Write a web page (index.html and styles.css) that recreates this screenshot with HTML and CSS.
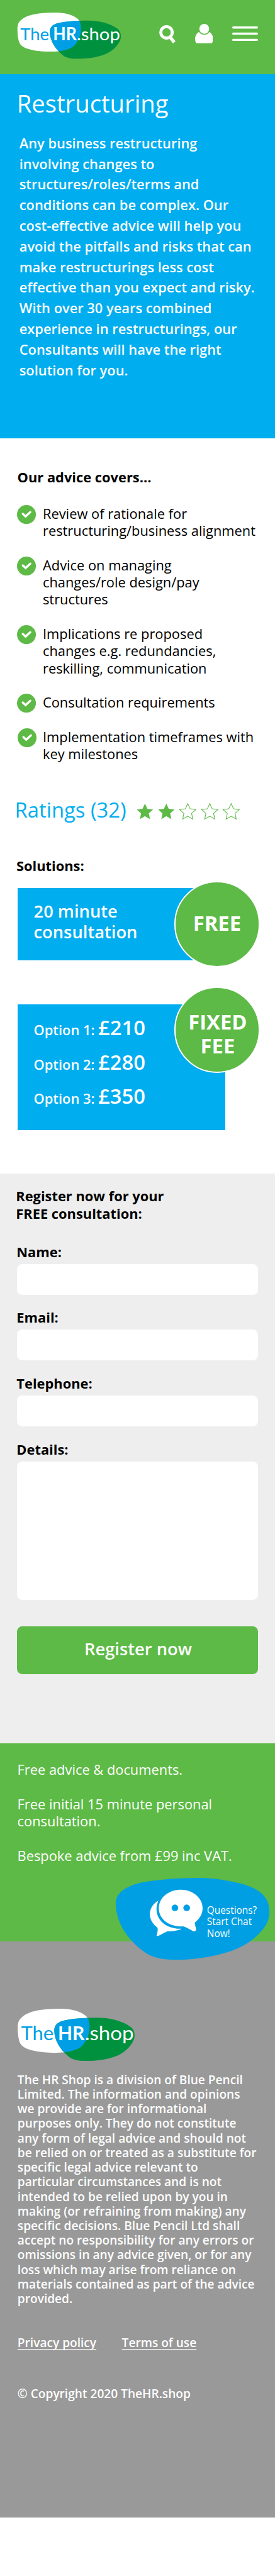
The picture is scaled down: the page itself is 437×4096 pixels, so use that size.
FILE: index.html
```
<!DOCTYPE html>
<html lang="en">
<head>
<meta charset="utf-8">
<title>Restructuring – TheHR.shop</title>
<link rel="stylesheet" href="styles.css">
</head>
<body>
<svg class="defs" aria-hidden="true">
  <defs>
    <path id="blob-white" d="M33,160 C33,122 44,104 62,88 C110,45 200,29 325,29 C430,29 482,55 511,80 C530,98 536,125 536,155 C536,200 520,245 495,275 C468,318 390,338 290,338 C190,337 95,322 60,285 C40,265 33,210 33,160Z"/>
    <path id="blob-green" d="M289,180 C289,145 312,126 345,115 C405,98 500,92 600,92 C710,94 800,132 834,166 C848,185 851,200 851,220 C851,250 820,308 750,348 C690,380 600,395 510,395 C450,395 415,385 390,365 C330,315 289,250 289,180Z"/>
    <clipPath id="overlap"><use href="#blob-white"/></clipPath>
    <symbol id="logo" viewBox="33 29 819 367">
      <use href="#blob-white" fill="#fff"/>
      <use href="#blob-green" fill="#00913f"/>
      <use href="#blob-green" fill="#009fe5" clip-path="url(#overlap)"/>
      <text class="logo-text" x="56" y="248" fill="#009fe5" textLength="228" lengthAdjust="spacingAndGlyphs">The</text>
      <text class="logo-text logo-bold" x="314" y="248" fill="#fff" textLength="187" lengthAdjust="spacingAndGlyphs">HR</text>
      <text class="logo-text" x="502" y="248" fill="#fff" textLength="343" lengthAdjust="spacingAndGlyphs">.shop</text>
    </symbol>
    <symbol id="check" viewBox="0 0 44 44">
      <circle cx="22" cy="22" r="22" fill="#5dba46"/>
      <path d="M13.5 20.5 L20 26.5 L31 16.5" fill="none" stroke="#fff" stroke-width="5" stroke-linecap="round"/>
    </symbol>
    <symbol id="star" viewBox="0 0 42 42">
      <path d="M21 2.5 L26.6 14.8 L40 16.3 L30 25.4 L32.8 38.7 L21 32 L9.2 38.7 L12 25.4 L2 16.3 L15.4 14.8Z"/>
    </symbol>
  </defs>
</svg>

<header class="header">
  <svg class="logo"><use href="#logo"/></svg>
  <nav class="tools">
    <svg class="icon-search" viewBox="33 -4 115 128"><circle cx="84" cy="46" r="40" fill="none" stroke="#fff" stroke-width="21"/><path d="M113 84 L138 116" stroke="#fff" stroke-width="23"/></svg>
    <svg class="icon-user" viewBox="282 -12 126 135" fill="#fff"><ellipse cx="346" cy="22.500" rx="34" ry="34.500"/><path d="M309,44 C292,55 282,72 282,92 C282,105 285,115 291,123 H399 C405,115 408,105 408,92 C408,72 398,55 383,44 C374,58 360,64 346,64 C331,64 318,58 309,44Z"/></svg>
    <svg class="icon-menu" viewBox="0 0 180 102" fill="#fff"><rect width="180" height="15" rx="7"/><rect y="43" width="180" height="15" rx="7"/><rect y="87" width="180" height="15" rx="7"/></svg>
  </nav>
</header>

<section class="hero">
  <h1>Restructuring</h1>
  <p>Any business restructuring<br>involving changes to<br>structures/roles/terms and<br>conditions can be complex. Our<br>cost-effective advice will help you<br>avoid the pitfalls and risks that can<br>make restructurings less cost<br>effective than you expect and risky.<br>With over 30 years combined<br>experience in restructurings, our<br>Consultants will have the right<br>solution for you.</p>
</section>

<main class="content">
  <h2>Our advice covers...</h2>
  <ul class="checks">
    <li><svg><use href="#check"/></svg><span>Review of rationale for<br>restructuring/business alignment</span></li>
    <li><svg><use href="#check"/></svg><span>Advice on managing<br>changes/role design/pay<br>structures</span></li>
    <li><svg><use href="#check"/></svg><span>Implications re proposed<br>changes e.g. redundancies,<br>reskilling, communication</span></li>
    <li><svg><use href="#check"/></svg><span>Consultation requirements</span></li>
    <li><svg><use href="#check"/></svg><span>Implementation timeframes with<br>key milestones</span></li>
  </ul>
  <div class="ratings">
    <span class="ratings-label">Ratings (32)</span>
    <svg class="star on"><use href="#star"/></svg>
    <svg class="star on"><use href="#star"/></svg>
    <svg class="star"><use href="#star"/></svg>
    <svg class="star"><use href="#star"/></svg>
    <svg class="star"><use href="#star"/></svg>
  </div>
  <h2 class="solutions">Solutions:</h2>
  <div class="card card-free">
    <p>20 minute<br>consultation</p>
    <div class="badge">FREE</div>
  </div>
  <div class="card card-fixed">
    <ul class="options">
      <li><span>Option 1: </span>£210</li>
      <li><span>Option 2: </span>£280</li>
      <li><span>Option 3: </span>£350</li>
    </ul>
    <div class="badge">FIXED<br>FEE</div>
  </div>
</main>

<form class="register">
  <h2>Register now for your<br>FREE consultation:</h2>
  <label>Name:<input type="text"></label>
  <label>Email:<input type="text"></label>
  <label>Telephone:<input type="text"></label>
  <label>Details:<textarea></textarea></label>
  <button type="button">Register now</button>
</form>

<section class="promo">
  <p>Free advice &amp; documents.</p>
  <p>Free initial 15 minute personal<br>consultation.</p>
  <p>Bespoke advice from £99 inc VAT.</p>
  <a class="chat">
    <svg viewBox="661 868 875 498" preserveAspectRatio="none">
      <path fill="#009fe3" d="M661,1020 C661,960 720,918 805,897 C880,880 1010,868 1125,868 C1180,868 1240,873 1290,884 C1450,910 1536,962 1536,1070 C1536,1110 1530,1140 1500,1180 C1440,1260 1370,1293 1310,1316 C1210,1350 1110,1366 1010,1366 C930,1366 880,1355 840,1330 C740,1260 661,1150 661,1020Z"/>
      <path fill="#fff" d="M1031,940 C1100,940 1156,990 1156,1052 C1156,1090 1137,1118 1111,1140 C1113,1156 1116,1168 1119,1180 C1120,1190 1110,1195 1100,1191 C1082,1182 1062,1168 1045,1163 C960,1167 906,1115 906,1052 C906,990 962,940 1031,940Z"/>
      <path fill="#fff" d="M904,1006 C873,1025 855,1055 855,1090 C855,1120 872,1148 898,1170 C903,1183 897,1205 893,1222 C912,1222 935,1200 955,1193 C985,1192 1015,1190 1036,1177 C950,1180 893,1125 893,1058 C893,1040 898,1022 904,1006Z"/>
      <ellipse fill="#009fe3" cx="998" cy="1050" rx="19" ry="20"/><ellipse fill="#009fe3" cx="1065" cy="1050" rx="19" ry="20"/>
    </svg>
    <span>Questions?<br>Start Chat<br>Now!</span>
  </a>
</section>

<footer class="footer">
  <svg class="logo"><use href="#logo"/></svg>
  <p class="legal">The HR Shop is a division of Blue Pencil<br>Limited. The information and opinions<br>we provide are for informational<br>purposes only. They do not constitute<br>any form of legal advice and should not<br>be relied on or treated as a substitute for<br>specific legal advice relevant to<br>particular circumstances and is not<br>intended to be relied upon by you in<br>making (or refraining from making) any<br>specific decisions. Blue Pencil Ltd shall<br>accept no responsibility for any errors or<br>omissions in any advice given, or for any<br>loss which may arise from reliance on<br>materials contained as part of the advice<br>provided.</p>
  <div class="links"><a>Privacy policy</a><a>Terms of use</a></div>
  <p class="copyright">© Copyright 2020 TheHR.shop</p>
</footer>
</body>
</html>
```
FILE: styles.css
```
/* 1rem = 10 design pixels */
html { font-size: 6.83px; }
* { box-sizing: border-box; margin: 0; padding: 0; }
body {
  font-family: "Open Sans", "Noto Sans", sans-serif;
  font-size: 3.2rem;
  line-height: 4rem;
  color: #000;
  background: #fff;
  height: 599.7rem;
  overflow-x: hidden;
}
ul { list-style: none; }
svg { display: block; flex: none; }
p, h1, h2, li, label { white-space: nowrap; }
h2 { font-size: 3.2rem; font-weight: 700; line-height: 4rem; }
.defs { position: absolute; width: 0; height: 0; }

.logo-text { font-family: Lato, sans-serif; font-size: 138px; font-weight: 400; }
.logo-bold { font-weight: 700; }

.header {
  display: flex;
  justify-content: space-between;
  align-items: flex-start;
  height: 17.3rem;
  padding: 2.9rem 4rem 0;
  background: #5dba46;
}
.header .logo { width: 24.3rem; height: 10.8rem; }
.tools { display: flex; align-items: flex-start; gap: 4.43rem; }
.icon-search { width: 3.83rem; height: 4.27rem; margin-top: 2.97rem; }
.icon-user { width: 4.2rem; height: 4.5rem; margin-top: 2.7rem; }
.icon-menu { width: 6rem; height: 3.4rem; margin-top: 3.2rem; }

.hero { height: 84.8rem; padding: 3.76rem 0 0 4.5rem; color: #fff; background: #00adef; }
.hero h1 { margin-left: -.6rem; font-size: 5.6rem; font-weight: 400; line-height: 6rem; }
.hero p { margin-top: 3.97rem; font-weight: 600; line-height: 4.8rem; }

.content { height: 171.12rem; padding: 7.03rem 0 0 4.08rem; }
.content h2 { margin-left: -.04rem; }
.checks { display: flex; flex-direction: column; gap: 4rem; margin-top: 4.4rem; }
.checks li { display: flex; gap: 1.55rem; margin-left: -.08rem; }
.checks svg { width: 4.4rem; height: 4.4rem; margin: .02rem 0 -1rem; }
.checks li:first-child svg { margin-top: .1rem; }
.checks li:last-child svg { margin-left: .07rem; margin-right: -.07rem; }
.ratings { display: flex; margin: 7.94rem 0 0 -.63rem; }
.ratings-label { width: 28.15rem; font-size: 4.8rem; line-height: 6rem; color: #00adef; }
.star { width: 4.2rem; height: 4.2rem; margin: 1.35rem .83rem 0 0; fill: none; stroke: #5dba46; stroke-width: 1.6; overflow: visible; }
.star.on { fill: #5dba46; stroke: none; }
.content .solutions { margin: 8.06rem 0 0 -.28rem; }

.card { position: relative; width: 48.3rem; padding-left: 3.76rem; color: #fff; background: #00adef; font-weight: 600; }
.card-free { height: 16.95rem; margin-top: 3.17rem; padding-top: 3.12rem; font-size: 4rem; line-height: 4.8rem; }
.card-fixed { height: 29.21rem; margin-top: 10.24rem; padding-top: 1.44rem; }
.options li { font-size: 4.8rem; line-height: 8rem; }
.options span { font-size: 3.2rem; line-height: 1; white-space: pre; }
.badge {
  position: absolute;
  left: 36.42rem;
  display: flex;
  align-items: center;
  justify-content: center;
  width: 20rem;
  height: 20rem;
  border: .3rem solid #fff;
  border-radius: 50%;
  background: #5dba46;
  font-size: 4.8rem;
  font-weight: 700;
  line-height: 5.6rem;
  text-align: center;
}
.card-free .badge { top: -1.5rem; padding-bottom: .34rem; }
.card-fixed .badge { top: -4.1rem; padding: 1.92rem 0 0 .3rem; }

.register { height: 132.58rem; padding: 3.26rem 4rem 0; background: #eee; }
.register h2 { margin: 0 0 5rem -.3rem; }
.register label { display: block; margin-bottom: 3.36rem; font-weight: 700; text-indent: -.14rem; }
.register label:nth-of-type(1) { margin-bottom: 3.14rem; }
.register input, .register textarea {
  display: block;
  width: 100%;
  height: 7.2rem;
  margin-top: .84rem;
  border: 0;
  border-radius: 1.2rem;
  background: #fff;
  resize: none;
}
.register textarea { height: 32.2rem; }
.register button {
  display: block;
  width: 100%;
  height: 11.2rem;
  margin-top: 6.1rem;
  padding: 0 0 .5rem .3rem;
  border: 0;
  border-radius: 1.2rem;
  color: #fff;
  background: #5dba46;
  font: 600 4rem/5rem "Open Sans", "Noto Sans", sans-serif;
}

.promo {
  position: relative;
  display: flex;
  flex-direction: column;
  gap: 4rem;
  height: 46.11rem;
  padding: 4.22rem 0 0 4.04rem;
  color: #fff;
  background: #5dba46;
}
.chat {
  position: absolute;
  left: 26.98rem;
  top: 31.42rem;
  width: 35.72rem;
  height: 19.06rem;
  padding: 6.24rem 0 0 21.17rem;
  font-size: 2.25rem;
  line-height: 2.7rem;
  white-space: nowrap;
}
.chat svg { position: absolute; inset: 0; width: 100%; height: 100%; }
.chat span { position: relative; display: block; }

.footer {
  height: 134.19rem;
  padding: 15.67rem 0 0 4.08rem;
  color: #fff;
  background: #999;
  font-size: 2.8rem;
  font-weight: 600;
  line-height: 3.4rem;
}
.footer .logo { width: 27.27rem; height: 12.2rem; }
.legal { margin-top: 2.78rem; }
.links { display: grid; grid-template-columns: 24.27rem auto; margin-top: 6.89rem; }
.links a { justify-self: start; text-decoration: underline; text-decoration-thickness: .15rem; text-underline-offset: .4rem; text-decoration-skip-ink: none; }
.copyright { margin-top: 8.34rem; }
```
